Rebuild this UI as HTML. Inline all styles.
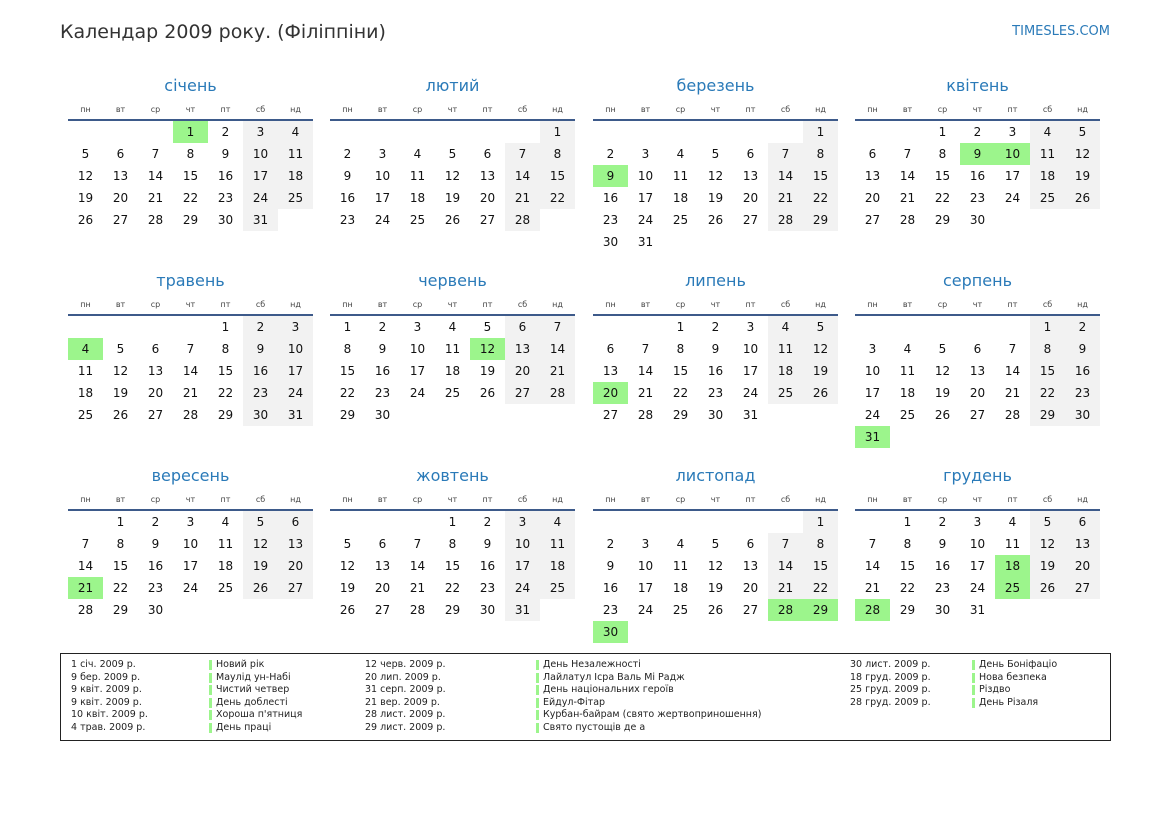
<!DOCTYPE html>
<html><head><meta charset="utf-8">
<style>
*{margin:0;padding:0;box-sizing:border-box}
body{width:1169px;height:827px;background:#fff;font-family:"DejaVu Sans","Liberation Sans",sans-serif;color:#111;position:relative;overflow:hidden}
.t{position:absolute;left:60px;top:21px;font-size:19px;color:#333}
.brand{position:absolute;right:59px;top:24px;font-size:13px;color:#2a7ab8}
.m{position:absolute;width:245px}
.mt{position:absolute;left:0;width:245px;text-align:center;top:1px;font-size:16px;color:#2a7ab8;height:22px;line-height:22px}
.wd{position:absolute;top:31px;width:35px;text-align:center;font-size:8px;color:#444}
.ln{position:absolute;top:45px;left:0;width:245px;height:2px;background:#3d5a8a}
.d{position:absolute;width:35px;height:22px;line-height:22px;text-align:center;font-size:12px}
.we{background:#f2f2f2}
.h{background:#9cf58c}
.leg{position:absolute;left:60px;top:653px;width:1051px;height:88px;border:1.5px solid #222}
.lt{position:absolute;font-size:9.5px;color:#222;white-space:nowrap}
.bar{position:absolute;width:3px;height:10px;background:#9cf58c}
</style></head><body>
<div class="t">Календар 2009 року. (Філіппіни)</div>
<div class="brand">TIMESLES.COM</div>
<div id="c"></div>
<div class="leg" id="leg"></div>
<script>
var names=["січень","лютий","березень","квітень","травень","червень","липень","серпень","вересень","жовтень","листопад","грудень"];
var wds=["пн","вт","ср","чт","пт","сб","нд"];
var hol={"0-1":1,"2-9":1,"3-9":1,"3-10":1,"4-4":1,"5-12":1,"6-20":1,"7-31":1,"8-21":1,"10-28":1,"10-29":1,"10-30":1,"11-18":1,"11-25":1,"11-28":1};
var xs=[68,330,593,855],ys=[74,269,464];
var h="";
for(var m=0;m<12;m++){
 var x=xs[m%4],y=ys[Math.floor(m/4)];
 h+='<div class="m" style="left:'+x+'px;top:'+y+'px"><div class="mt">'+names[m]+'</div>';
 for(var i=0;i<7;i++)h+='<div class="wd" style="left:'+(i*35)+'px">'+wds[i]+'</div>';
 h+='<div class="ln"></div>';
 var first=(new Date(2009,m,1).getDay()+6)%7,n=new Date(2009,m+1,0).getDate();
 for(var d=1;d<=n;d++){
  var p=first+d-1,c=p%7,r=Math.floor(p/7);
  var cl="d"+(hol[m+"-"+d]?" h":(c>=5?" we":""));
  h+='<div class="'+cl+'" style="left:'+(c*35)+'px;top:'+(47+r*22)+'px">'+d+'</div>';
 }
 h+='</div>';
}
document.getElementById("c").innerHTML=h;
var L=[
[[10,"1 січ. 2009 р.","Новий рік"],[10,"9 бер. 2009 р.","Маулід ун-Набі"],[10,"9 квіт. 2009 р.","Чистий четвер"],[10,"9 квіт. 2009 р.","День доблесті"],[10,"10 квіт. 2009 р.","Хороша п'ятниця"],[10,"4 трав. 2009 р.","День праці"]],
[[304,"12 черв. 2009 р.","День Незалежності"],[304,"20 лип. 2009 р.","Лайлатул Ісра Валь Мі Радж"],[304,"31 серп. 2009 р.","День національних героїв"],[304,"21 вер. 2009 р.","Ейдул-Фітар"],[304,"28 лист. 2009 р.","Курбан-байрам (свято жертвоприношення)"],[304,"29 лист. 2009 р.","Свято пустощів де а"]],
[[789,"30 лист. 2009 р.","День Боніфаціо"],[789,"18 груд. 2009 р.","Нова безпека"],[789,"25 груд. 2009 р.","Різдво"],[789,"28 груд. 2009 р.","День Різаля"]]];
var bx=[148,475,911];var g="";
for(var k=0;k<3;k++)for(var j=0;j<L[k].length;j++){
 var yy=5+j*12.6;
 g+='<div class="lt" style="left:'+L[k][j][0]+'px;top:'+yy+'px">'+L[k][j][1]+'</div>';
 g+='<div class="bar" style="left:'+bx[k]+'px;top:'+(yy+1)+'px"></div>';
 g+='<div class="lt" style="left:'+(bx[k]+7)+'px;top:'+yy+'px">'+L[k][j][2]+'</div>';
}
document.getElementById("leg").innerHTML=g;
</script>
</body></html>
